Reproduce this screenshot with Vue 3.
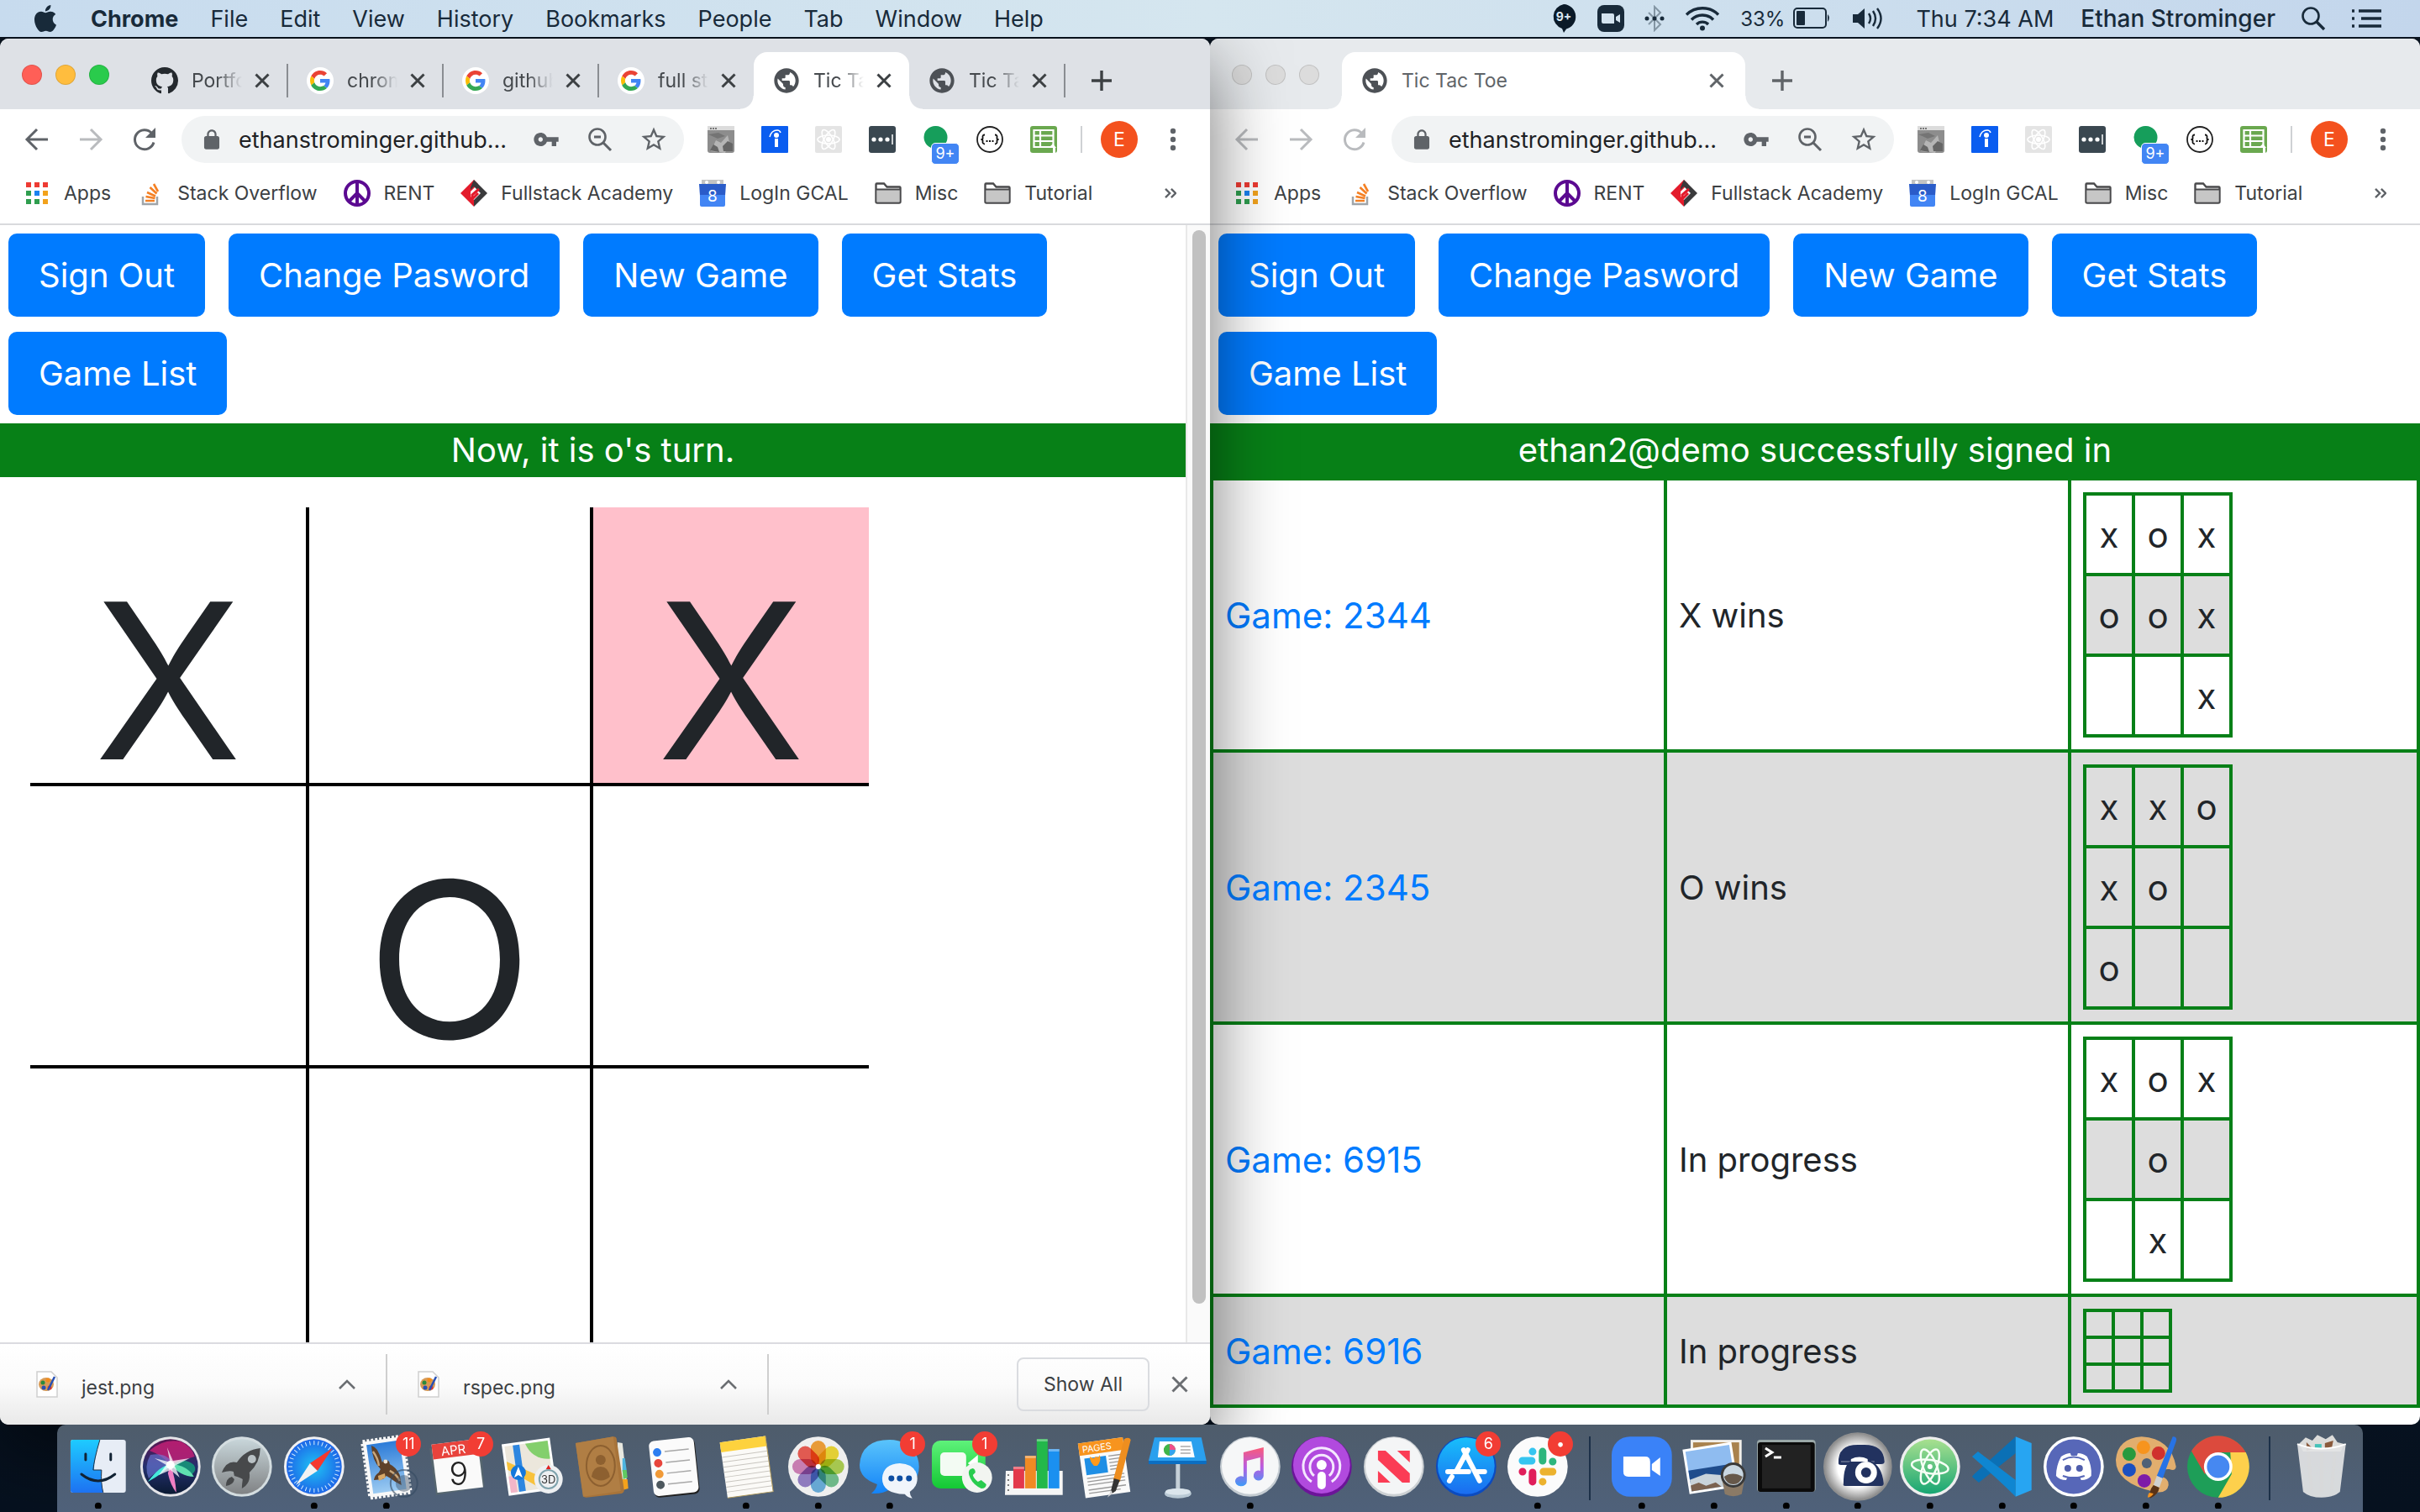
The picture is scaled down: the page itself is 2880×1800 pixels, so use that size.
<script setup>
import { ref } from 'vue'

const menus = ['File', 'Edit', 'View', 'History', 'Bookmarks', 'People', 'Tab', 'Window', 'Help']

const windows = [
  {
    id: 'left',
    front: true,
    tabs: [
      { icon: 'github', title: 'Portfolio' },
      { icon: 'google', title: 'chrome' },
      { icon: 'google', title: 'github t' },
      { icon: 'google', title: 'full stack' },
      { icon: 'globe', title: 'Tic Tac Toe', active: true },
      { icon: 'globe', title: 'Tic Tac Toe' }
    ],
    message: "Now, it is o's turn."
  },
  {
    id: 'right',
    front: false,
    tabs: [{ icon: 'globe', title: 'Tic Tac Toe', active: true }],
    message: 'ethan2@demo successfully signed in'
  }
]

const address = ref('ethanstrominger.github...')
const actions = ['Sign Out', 'Change Pasword', 'New Game', 'Get Stats', 'Game List']
const board = ['X', '', 'X', '', 'O', '', '', '', '']
const lastMove = 2

const games = [
  { id: 2344, state: 'X wins', rows: [['x', 'o', 'x'], ['o', 'o', 'x'], ['', '', 'x']] },
  { id: 2345, state: 'O wins', rows: [['x', 'x', 'o'], ['x', 'o', ''], ['o', '', '']] },
  { id: 6915, state: 'In progress', rows: [['x', 'o', 'x'], ['', 'o', ''], ['', 'x', '']] },
  { id: 6916, state: 'In progress', rows: [['', '', ''], ['', '', ''], ['', '', '']], empty: true }
]

const bookmarks = [
  { label: 'Apps', art: '<g fill="#ee3b33"><path d="M3 3h6v6H3zM13 3h6v6h-6zM23 3h6v6h-6z"/></g><path fill="#2f9e4f" d="M3 13h6v6H3zM3 23h6v6H3zM13 23h6v6h-6z"/><path fill="#1a82f0" d="M13 13h6v6h-6z"/><path fill="#f2a21c" d="M23 13h6v6h-6zM23 23h6v6h-6z"/>' },
  { label: 'Stack Overflow', art: '<path d="M7 20v9h17v-9" fill="none" stroke="#9fa5aa" stroke-width="2.5"/><path d="M10 25h11M10.500 20l11 2M12 15l10 4.500M15.500 9l8 7.500M20 5l5 9" stroke="#f48024" stroke-width="2.600" fill="none"/>' },
  { label: 'RENT', art: '<circle cx="16" cy="16" r="14" fill="#fff" stroke="#5b0a91" stroke-width="4"/><path d="M16 2v28M16 16L6 26M16 16l10 10" stroke="#5b0a91" stroke-width="4"/>' },
  { label: 'Fullstack Academy', art: '<path d="M16 0L0 16l16 16V24l-4-4v-6l9-9z" fill="#e31b2b"/><path d="M16 0l16 16-16 16V24l8-8-8-8-4 4V9z" fill="#3a3a3c"/><path d="M22 11l-8 7v4M21 16l-7 7" stroke="#e31b2b" stroke-width="3" fill="none"/>' },
  { label: 'LogIn GCAL', art: '<path fill="#c3c3c3" d="M3 0h26v7H3z"/><circle cx="9" cy="3" r="2" fill="#fff"/><circle cx="23" cy="3" r="2" fill="#fff"/><path fill="#2a5cc9" d="M0 5h32l-1 14H1z"/><path fill="#4285f4" d="M1 18h30v12q0 2-2 2H3q-2 0-2-2z"/><text x="16" y="26" font-size="19" text-anchor="middle" fill="#fff" font-family="Inter, sans-serif">8</text>' },
  { label: 'Misc', folder: true },
  { label: 'Tutorial', folder: true }
]
const folderArt = '<path d="M1.500 26V5.500q0-1 1-1H11l3.500 4H29.500q1 0 1 1V26q0 1.500-1.500 1.500H3Q1.500 27.500 1.500 26z" fill="#fff" stroke="#4a4a4c" stroke-width="2.400"/><path d="M2.500 12h27v14.500h-27z" fill="#c6c6c6"/><path d="M2 11.500h28" stroke="#4a4a4c" stroke-width="2"/>'

const favicons = {
  github: '<path transform="scale(2)" fill="#24292e" fill-rule="evenodd" d="M8 0C3.580 0 0 3.580 0 8c0 3.540 2.290 6.530 5.470 7.590.4.070.55-.17.55-.38 0-.19-.01-.82-.01-1.490-2.010.37-2.530-.49-2.690-.94-.09-.23-.48-.94-.82-1.130-.28-.15-.68-.52-.01-.53.63-.01 1.080.58 1.230.82.72 1.210 1.870.87 2.330.66.070-.52.280-.87.510-1.070-1.780-.2-3.640-.89-3.640-3.950 0-.87.310-1.590.820-2.150-.08-.2-.36-1.020.08-2.120 0 0 .67-.21 2.200.82.64-.18 1.320-.27 2-.27s1.360.09 2 .27c1.530-1.040 2.200-.82 2.200-.82.440 1.100.160 1.920.080 2.120.510.560.820 1.270.820 2.150 0 3.070-1.870 3.750-3.650 3.950.290.250.540.730.540 1.480 0 1.070-.01 1.930-.01 2.200 0 .21.150.460.550.380A8.010 8.010 0 0016 8c0-4.420-3.580-8-8-8z"/>',
  google: '<circle cx="16" cy="16" r="16" fill="#fff"/><g transform="translate(4 4) scale(.5)"><path fill="#EA4335" d="M24 9.500c3.540 0 6.710 1.220 9.210 3.600l6.850-6.850C35.900 2.380 30.470 0 24 0 14.620 0 6.510 5.380 2.560 13.220l7.980 6.190C12.430 13.720 17.740 9.500 24 9.500z"/><path fill="#4285F4" d="M46.980 24.550c0-1.570-.15-3.090-.38-4.550H24v9.020h12.940c-.58 2.960-2.260 5.480-4.780 7.180l7.730 6c4.510-4.180 7.090-10.360 7.090-17.650z"/><path fill="#FBBC05" d="M10.530 28.590c-.48-1.450-.76-2.990-.76-4.590s.27-3.140.76-4.590l-7.980-6.190C.92 16.460 0 20.120 0 24c0 3.880.92 7.540 2.560 10.780l7.970-6.190z"/><path fill="#34A853" d="M24 48c6.480 0 11.930-2.130 15.890-5.810l-7.730-6c-2.150 1.450-4.920 2.300-8.160 2.300-6.260 0-11.570-4.220-13.470-9.910l-7.980 6.190C6.510 42.620 14.620 48 24 48z"/></g>',
  globe: '<path transform="scale(1.333)" fill="#4d5156" d="M12 1C5.900 1 1 5.900 1 12s4.900 11 11 11 11-4.900 11-11S18.100 1 12 1zm-1 18.930c-3.950-.49-7-3.850-7-7.930 0-.62.080-1.210.210-1.790L9 15v1c0 1.100.9 2 2 2v1.930zm6.900-2.540c-.26-.81-1-1.390-1.900-1.390h-1v-3c0-.55-.45-1-1-1H8v-2h2c.55 0 1-.45 1-1V7h2c1.100 0 2-.9 2-2v-.41c2.930 1.190 5 4.060 5 7.410 0 2.080-.8 3.970-2.100 5.390z"/>'
}

const extensions = [
  { name: 'Screenshot', art: '<rect width="32" height="32" rx="3" fill="#8d8d8d"/><path d="M0 0h32v5H0z" fill="#dcdcdc"/><path d="M3 2h2v2H3zM6 2h2v2H6zM9 2h2v2H9z" fill="#777"/><path d="M4 30l6-13 6 3 8-9 2 8-5 13z" fill="#b5b5b5"/><path d="M3 29l4-7 5 3 2 6zM18 24l6-6 6 3v9H19z" fill="#666"/><path d="M1 10l12-2 8 4-9 3z" fill="#747474"/>' },
  { name: 'Info', art: '<rect width="32" height="32" rx="1" fill="#0a5df0"/><circle cx="18" cy="11" r="3" fill="#fff"/><path d="M16 15h4v10h-4z" fill="#fff"/><path d="M10 13q2-8 9-8 3 0 4 3" stroke="#fff" stroke-width="1.500" fill="none"/>' },
  { name: 'React', art: '<rect width="32" height="32" rx="2" fill="#e4e4e4"/><g fill="none" stroke="#fff" stroke-width="1.600"><ellipse cx="16" cy="16" rx="13" ry="5"/><ellipse cx="16" cy="16" rx="13" ry="5" transform="rotate(60 16 16)"/><ellipse cx="16" cy="16" rx="13" ry="5" transform="rotate(120 16 16)"/></g><circle cx="16" cy="16" r="3" fill="#fff"/>' },
  { name: 'Passwords', art: '<rect width="32" height="32" rx="3" fill="#3a4750"/><circle cx="6" cy="16" r="2.600" fill="#fff"/><circle cx="14" cy="16" r="2.600" fill="#fff"/><circle cx="22" cy="16" r="2.600" fill="#fff"/><path d="M28 10v12" stroke="#fff" stroke-width="1.500"/>' },
  { name: 'Hangouts', badge: '9+', art: '<path d="M16 0a14 13.500 0 1 1-1 27A14 13.500 0 0 1 16 0z" fill="#169e5b"/>' },
  { name: 'JSON', art: '<circle cx="16" cy="16" r="15" fill="#fff" stroke="#222" stroke-width="1.800"/><path d="M10 10.500q-3 0-2.500 3t-2 2.500q2.500 0 2 2.500t2.500 3M22 10.500q3 0 2.500 3t2 2.500q-2.500 0-2 2.500t-2.500 3" fill="none" stroke="#111" stroke-width="1.800"/><path d="M11.500 17h2v2h-2zM15 17h2v2h-2zM18.500 17h2v2h-2z" fill="#111"/>' },
  { name: 'Sheets', art: '<rect width="32" height="32" rx="3" fill="#6aa84f"/><path d="M4.500 5h23v20h-23zM4.500 11.500h23M4.500 18h23M12 5v20" fill="none" stroke="#fff" stroke-width="2.200"/><path d="M27 32v-6h-5l5-5 4 5h-1v6z" fill="#fff"/>' }
]

const downloads = ['jest.png', 'rspec.png']

const petals = ['#f79a1f', '#f2d91c', '#a6cf3d', '#62bd82', '#5aa9dd', '#8b72c4', '#cf74b4', '#ef4a3e']
const petalArt = petals.map((c, i) => `<rect x="-9" y="-31" width="18" height="29" rx="9" fill="${c}" opacity=".88" transform="rotate(${i * 45})"/>`).join('')
const ticks = Array.from({ length: 36 }, (_, i) => `<path d="M0 -31v5" stroke="#d9efff" stroke-width="1" transform="rotate(${i * 10})"/>`).join('')

const dockLeft = [
  { name: 'Finder', open: true, art: '<rect x="-33" y="-32" width="66" height="63" rx="3" fill="#e7edf6"/><path d="M-30-32H2Q-5-8-5 4H4Q3 20 6 31H-30q-3 0-3-3V-29q0-3 3-3z" fill="url(#finder)"/><path d="M2-32Q-5-8-6 4H4Q3 20 6 31" fill="none" stroke="#234" stroke-width="1"/><path d="M-15-15v7M15-15v7" stroke="#123" stroke-width="3" stroke-linecap="round"/><path d="M-20 9Q0 25 20 9" fill="none" stroke="#123" stroke-width="3" stroke-linecap="round"/>' },
  { name: 'Siri', art: '<circle r="36" fill="#e4e4e8"/><circle r="33" fill="url(#siri)"/><path d="M-25-19Q-8-34 12-30 26-24 29-12 14-8 2 0-10-14-25-19z" fill="#d0207a" opacity=".75"/><path d="M-24-14Q-2-18 4 0-8-2-26 14-32 0-24-14z" fill="#6f7fe0" opacity=".6"/><path d="M2-2Q16-12 28-2 32 4 26 9 14 2 2-2z" fill="#16957a" opacity=".9"/><path d="M-27 18Q-12-2 1-3-8 8-27 18z" fill="#45eadb"/><path d="M0-3Q20-2 28 12 12 12 0-3z" fill="#5fe0b0"/><path d="M0-3Q6 14 7 31 0 22-3 8z" fill="#f07fc4"/><path d="M0-3l-4-20 7 16 20-3-18 9 6 14L0 4l-14 6L-5-2l-14-8 16 4z" fill="#fff" opacity=".75"/><circle cy="-2" r="5" fill="#fff"/>' },
  { name: 'Launchpad', art: '<circle r="36" fill="#d4dde0"/><circle r="33" fill="url(#pad)"/><path d="M22-22Q4-20-6-5-18-8-24 7-14 4-10 6L-9 11Q-2 13 1 15 0 22 0 26 11 20 9 7 22-5 22-22z" fill="#47494b"/><circle cx="12" cy="-9" r="5" fill="#b9c1c4"/><path d="M-12 12Q-19 14-19 23-10 22-9 15z" fill="#47494b"/>' },
  { name: 'Safari', open: true, art: `<circle r="36" fill="#f1f1f3"/><circle r="33" fill="url(#safari)"/>${ticks}<path d="M22-22L4 5-5-4z" fill="#f5382f"/><path d="M-22 22L4 5-5-4z" fill="#f2f2f2"/>` },
  { name: 'Mail', open: true, badge: '11', art: '<g transform="rotate(-8)"><rect x="-24" y="-33" width="48" height="67" fill="#f8f8f8" stroke="#f8f8f8" stroke-width="5" stroke-dasharray="3 2"/><rect x="-20" y="-29" width="40" height="59" fill="url(#sky)"/></g><path d="M-18-25q4 1 7 5 4 7 6 15 2-4 5-3 4 1 4 5 8 4 12 13l2 12q-7-3-13-8l-5-3-4 4-11 1q1-6 6-9l2-4q-10-10-11-28z" fill="#5f4129"/><path d="M-16-18q6 8 7 17M4 5q8 4 12 12" stroke="#c9a77c" stroke-width="2.500" fill="none"/><path d="M-10 11l8-3 1 5-8 4z" fill="#d8a868"/><circle cx="-1" cy="-6" r="2.500" fill="#f0e6d8"/><circle cx="21" cy="20" r="16" fill="none" stroke="#344a60" stroke-width="2" opacity=".6"/><circle cx="21" cy="20" r="10" fill="#3d5268" opacity=".45"/>' },
  { name: 'Calendar', badge: '7', art: '<path d="M-34-22L-26 34 32 24 28-20z" fill="#56666f"/><g transform="rotate(-7)"><rect x="-28" y="-30" width="55" height="58" fill="#fafafa"/><rect x="-28" y="-30" width="55" height="18" fill="#e8433c"/></g><text x="-3" y="-15" transform="rotate(-7)" font-size="15" text-anchor="middle" fill="#fff" font-family="Inter, sans-serif">APR</text><text x="1" y="22" font-size="38" font-weight="300" text-anchor="middle" fill="#222" font-family="Inter, sans-serif">9</text>' },
  { name: 'Maps', art: '<g transform="rotate(-8)"><rect x="-30" y="-31" width="58" height="62" fill="#fff"/><rect x="-27" y="-28" width="52" height="56" fill="#ece7dc"/><path d="M-2-28h27v22Q4-8-2-28z" fill="#83cf6c"/><path d="M-27-10L25 22v6H10L-27 0z" fill="#f8c23c"/><path d="M-17-28h8v56h-8z" fill="#2d86e0"/><path d="M-27 8h8v20h-8z" fill="#f3b6c8"/></g><circle cx="-14" cy="7" r="9" fill="#1478dc"/><path d="M-14 0l5 13-5-3-5 3z" fill="#fff"/><circle cx="22" cy="15" r="17" fill="#eef0f2"/><circle cx="22" cy="15" r="11" fill="none" stroke="#7fa3ad" stroke-width="2"/><text x="22" y="20" font-size="13" text-anchor="middle" fill="#333" font-family="Inter, sans-serif">3D</text><path d="M22-2l3 5h-6z" fill="#e02020"/>' },
  { name: 'Contacts', art: '<path d="M18-29l6 1 6 52-10 6z" fill="#e8e8e0"/><path d="M24-10h3l2 14-5 2z" fill="#4fb5e0"/><path d="M24 4h5l1 9-5 2z" fill="#5fca62"/><path d="M24 15h6l1 11-7 2z" fill="#f5a21c"/><path d="M-32-28L13-36q4 0 4 3L26 28q0 3-3 4L-19 37q-4 0-4-3z" fill="#a8743a"/><path d="M-32-28L13-36l9 65-45 7z" fill="#b07e44"/><ellipse cx="-2" cy="-1" rx="17" ry="24" fill="none" stroke="#8d6030" stroke-width="2"/><circle cx="-2" cy="-8" r="6" fill="#8d6030"/><path d="M-13 12q2-12 11-12T9 12q-10 9-22 0z" fill="#8d6030"/>' },
  { name: 'Reminders', art: '<g transform="rotate(-6)"><rect x="-26" y="-31" width="54" height="66" rx="6" fill="#222"/><rect x="-27" y="-33" width="54" height="66" rx="6" fill="#fbfbfb"/><path d="M-9-19h29M-9-6h29M-9 7h29M-9 20h29" stroke="#a8a8a8" stroke-width="1.500"/><circle cx="-18" cy="-19" r="5" fill="#2c7df0"/><circle cx="-18" cy="-6" r="5" fill="#e8453c"/><circle cx="-18" cy="7" r="5" fill="#f19a37"/><circle cx="-18" cy="20" r="5" fill="#4d585e"/></g>' },
  { name: 'Notes', open: true, art: '<g transform="rotate(-8)"><rect x="-27" y="-33" width="55" height="67" fill="#fbfaf7"/><rect x="-27" y="-33" width="55" height="12" fill="#fdd23e"/><path d="M-27-15h55M-27-9h55M-27-3h55M-27 3h55M-27 9h55M-27 15h55M-27 21h55M-27 27h55" stroke="#c9c6c0" stroke-width="1"/><path d="M-27 34h55V-33" fill="none" stroke="#b0995a" stroke-width="1"/></g>' },
  { name: 'Photos', open: true, art: `<circle r="36" fill="#efefef"/><g class="petals">${petalArt}</g><circle r="3" fill="#fff"/>` },
  { name: 'Messages', open: true, badge: '1', art: '<path d="M0-32C20-32 35-19 35 0S20 27 0 27q-8 6-22 5 6-5 7-11Q-36 14-36-2-34-32 0-32z" fill="url(#msg)"/><path d="M12-4q20 1 21 18 0 10-9 16 0 4 3 8-6-1-9-5Q-9 32-9 14-8-3 12-4z" fill="#f0f5fb"/><circle cx="2" cy="14" r="3.500" fill="#0c4da2"/><circle cx="12" cy="14" r="3.500" fill="#0c4da2"/><circle cx="23" cy="14" r="3.500" fill="#0c4da2"/>' },
  { name: 'FaceTime', badge: '1', art: '<rect x="-36" y="-31" width="64" height="57" rx="10" fill="url(#face)"/><rect x="-26" y="-17" width="31" height="28" rx="5" fill="#f3fbf3"/><path d="M7-4l12-10v20z" fill="#fff"/><circle cx="18" cy="13" r="18" fill="#f2f5f1"/><path d="M10 3q-4 3 0 11t13 12q6 0 6-5l-6-5-4 2q-5-4-6-8l3-3q0-4-3-5z" fill="#28cc4e"/>' },
  { name: 'Numbers', art: '<path d="M-34 5H34V34H-35z" fill="#f6f6f6"/><path d="M-31 9v20" stroke="#777" stroke-width="2" stroke-dasharray="2 4"/><rect x="-25" y="0" width="13" height="26" fill="#e3384b"/><rect x="-11" y="-13" width="13" height="39" fill="#f08a24"/><rect x="3" y="-33" width="13" height="59" fill="#23b84a"/><rect x="17" y="-21" width="13" height="47" fill="#1b90f0"/><path d="M-25 0h13v3h-13zM-11-13H2v3h-13zM3-33h13v3H3zM17-21h13v3H17z" fill="#fff" opacity=".35"/>' },
  { name: 'Pages', art: '<g transform="rotate(-8)"><rect x="-29" y="-32" width="54" height="66" fill="#fafafa"/><rect x="-29" y="-32" width="54" height="15" fill="#f7941e"/><text x="-25" y="-20" font-size="11" fill="#fff" font-family="Inter, sans-serif">PAGES</text><rect x="-24" y="-13" width="26" height="20" fill="#1f8fe5"/><path d="M5-12h16M5-8h16M5-4h16M5 0h16M5 4h16M-24 11h45M-24 15h45M-24 19h45M-24 25h45M-24 29h38" stroke="#999" stroke-width="1.300"/></g><path d="M-19-12q5 4 7 0 4 2 5-2 2 8-3 13h-4q-5-5-5-11z" fill="#ff9a1c"/><path d="M22-33q6-3 8 1L17 18l-8-2z" fill="#ee8e1f"/><path d="M10 14l7 2-5 13-7 5z" fill="#333"/><path d="M7 28l-5 9 6-5z" fill="#ddd"/>' },
  { name: 'Keynote', art: '<path d="M-28-35h56l6 28H-35z" fill="#2aa0ee"/><path d="M-35-7h69v4h-69z" fill="#0b6ec2"/><path d="M-22-30h38l4 19h-44z" fill="#fff"/><circle cx="-10" cy="-20" r="7" fill="#3fb548"/><path d="M-10-20v-7a7 7 0 0 1 7 7z" fill="#f04f8b"/><path d="M-10-20h7a7 7 0 0 1-7 7z" fill="#34a4f0"/><path d="M3-24h12M3-20h12M3-16h12" stroke="#aaa" stroke-width="1.500"/><path d="M0-3v34" stroke="#c5d0d8" stroke-width="5"/><ellipse cx="0" cy="32" rx="16" ry="6" fill="#b8c8d4"/><ellipse cx="0" cy="30" rx="15" ry="4" fill="#dbe5ec"/>' },
  { name: 'Music', open: true, art: '<circle r="36" fill="#c5ccd2"/><circle cy="-1" r="34" fill="#f6f7f8"/><path d="M-8-17L16-23V11a6 6 0 1 1-4-6V-11L-4-7V17a7 6 0 1 1-4-5z" fill="url(#music)"/>' },
  { name: 'Podcasts', art: '<circle r="36" fill="#6c1499"/><circle cy="-2" r="34" fill="#b14ade"/><g fill="none" stroke="#f5e8ff" stroke-width="3"><path d="M-12 18a22 22 0 1 1 24 0M-9 11a14 14 0 1 1 18 0"/></g><circle cy="-2" r="6" fill="#fff"/><rect x="-5" y="6" width="10" height="21" rx="5" fill="#fff"/>' },
  { name: 'News', art: '<circle r="36" fill="#ccd0d3"/><circle cy="-1" r="34" fill="#f4f5f6"/><path d="M-19-19H-10L19 8v11H10L-19-8zM4-19h15V-5zM-19 5L-4 19h-15z" fill="#fb3c55"/>' },
  { name: 'App Store', badge: '6', art: '<circle r="36" fill="#0b4bc0"/><circle cy="-1" r="34" fill="url(#store)"/><path d="M2-20L-12 6M-17 12l-3 5M-3-20L16 17M-22 6H3M13 6h9" stroke="#fff" stroke-width="6" stroke-linecap="round"/>' },
  { name: 'Slack', open: true, badge: '•', art: '<circle r="36" fill="#fbfbfb"/><g stroke-width="9" stroke-linecap="round"><path d="M-18-7H-7M-6-18h.1" stroke="#36c5f0"/><path d="M6-18V-7M18-6h.1" stroke="#2eb67d"/><path d="M-6 7V18M-18 6h.1" stroke="#e01e5a"/><path d="M7 6H18M6 18h.1" stroke="#ecb22e"/></g>' }
]

const dockRight = [
  { name: 'Zoom', open: true, art: '<rect x="-36" y="-36" width="72" height="72" rx="22" fill="#3a82f8"/><path d="M-22-12H4q6 0 6 6V12h-26q-6 0-6-6z" fill="#fff"/><path d="M12-3l10-8V11L12 4z" fill="#fff"/>' },
  { name: 'Preview', open: true, art: '<rect x="-28" y="-32" width="61" height="42" fill="#f2efe9"/><rect x="-25" y="-29" width="55" height="38" fill="#a9824d"/><g transform="rotate(-9)"><rect x="-34" y="-26" width="59" height="54" fill="#fff"/><rect x="-31" y="-23" width="53" height="48" fill="#8fbcf0"/><path d="M-31 0h53v14h-53z" fill="#1f4c8c"/><path d="M-31 11l20-4 33 8v10h-53z" fill="#c9d3da"/><path d="M-31 18l10-2 8 5 12-2 6 6h-36z" fill="#7b6250"/></g><path d="M9 12h28l-4 21q-10 5-20 0z" fill="#8b7a66"/><circle cx="23" cy="10" r="15" fill="#3a3a3a"/><circle cx="23" cy="10" r="12" fill="#c9d7e2"/><path d="M12 12q10-7 22 0-3 9-11 9t-11-9z" fill="#66584a"/>' },
  { name: 'Terminal', open: true, art: '<rect x="-35" y="-32" width="70" height="62" rx="4" fill="#9aa8a8"/><rect x="-34" y="-29" width="68" height="59" rx="3" fill="#0b0b0b"/><rect x="-29" y="-26" width="58" height="52" fill="#222"/><path d="M-25-22l8 5-8 5M-15-11h9" fill="none" stroke="#fff" stroke-width="3"/>' },
  { name: 'Phone', open: true, art: '<circle r="41" fill="#8f8f8f"/><circle r="40" fill="url(#phone)"/><path d="M-23-4q-1-22 23-22h8q23 0 24 20 0 3-4 3H16q-4 0-4-6-10-5-20 0 0 7-5 7h-7q-3 0-3-2z" fill="#22325f"/><path d="M-20-6h40" stroke="#fff" stroke-width="2" opacity=".25"/><path d="M-8-14v8h20v-8h3v7q14 6 16 27 0 3-3 3h-43q-3 0-2-3 0-22 9-27v-7z" fill="#22325f"/><circle cx="10" cy="7" r="13" fill="#fff"/><circle cx="10" cy="7" r="6" fill="#22325f"/>' },
  { name: 'Atom', open: true, art: '<circle r="36" fill="#eee"/><circle r="32.500" fill="url(#atom)"/><g fill="none" stroke="#f5fff5" stroke-width="2.500"><ellipse rx="22" ry="8" transform="rotate(8)"/><ellipse rx="22" ry="8" transform="rotate(68)"/><ellipse rx="22" ry="8" transform="rotate(112)"/></g><circle r="3" fill="#fff"/>' },
  { name: 'Code', open: true, art: '<path d="M16-36v20L-28 19l-8-7q2-3 8-8z" fill="#0b70b5"/><path d="M-36-12l7-6L16 16v20Q-5 15-36-12z" fill="#0f86d1"/><path d="M16-36L35-28V28L16 36z" fill="#27a5f2"/>' },
  { name: 'Discord', open: true, art: '<circle r="36" fill="#fff"/><circle r="32.500" fill="#5767b8"/><path d="M-15-12q6-4 11-4l1 3H4l1-3q6 0 11 4 6 11 5 23-4 5-12 5l-2-4H-7l-2 4q-8 0-12-5 0-12 6-23z" fill="#fff"/><circle cx="-7" cy="2" r="4" fill="#4f5eac"/><circle cx="7" cy="2" r="4" fill="#4f5eac"/><path d="M-13-8q13-7 26 0M-13 11q13 5 26 0" stroke="#5767b8" stroke-width="2" fill="none"/>' },
  { name: 'Paint', open: true, art: '<path d="M-5-36Q30-34 36 0 35 6 28 3q-12-1-10 9 10 2 9 10Q25 33 10 30-36 20-36-8-34-34-5-36z" fill="#e2ae6e"/><circle cx="1" cy="-4" r="6" fill="#4f6076"/><circle cx="-3" cy="-23" r="8" fill="#f7941e"/><circle cx="-20" cy="-15" r="8" fill="#279a3e"/><circle cx="-20" cy="4" r="8" fill="#1b4fc0"/><circle cx="-2" cy="17" r="8" fill="#7d1ba8"/><circle cx="15" cy="-16" r="8" fill="#d0312d"/><path d="M32-36q6 0 4 6L20 14l-7-3z" fill="#2773e6"/><path d="M13 11l7 3-4 11-7-3z" fill="#d0d0d0"/><path d="M9 22l7 3q-1 8-11 13-2-9 4-16z" fill="#5a3216"/><path d="M2 37q0-4 2-6l5 1q-2 4-7 5z" fill="#f7941e"/>' },
  { name: 'Chrome', open: true, art: '<circle r="37" fill="#1e9e58"/><path d="M-32-18.500A37 37 0 0 1 32-18.500L33-17H0L-16 9z" fill="#dc4a3d"/><path d="M33-17A37 37 0 0 1 0 37L16 9 14.500-17z" fill="#fdd04c"/><circle r="17" fill="#fff"/><circle r="13.500" fill="#4688f1"/>' }
]
const trash = [
  { name: 'Trash', art: '<path d="M-27-27l8-8 8 4 6-7 10 5 8-5 6 9 8 2-4 9h-45z" fill="#dcdcda"/><path d="M-18-29l8 8-8 2zM4-28l10-3-2 10-8-1z" fill="#8a5a3c"/><path d="M-8-27h8v6h-8z" fill="#45c2b8"/><path d="M-29-27Q0-17 29-27L22 30Q14 37 0 37T-22 30z" fill="#e2e3e4" opacity=".93"/><path d="M-29-27Q0-16 29-27" fill="none" stroke="#fff" stroke-width="2"/><path d="M-16-18l4 46M16-18l-4 46M0-16v46" stroke="#d8d9da" stroke-width="4"/>' }
]
const dockGroups = [dockLeft, dockRight, trash]
</script>

<template>
  <div class="desktop">
    <svg class="defs" width="0" height="0" aria-hidden="true">
      <defs>
        <linearGradient id="finder" x2="0" y2="1"><stop stop-color="#1ecbff" /><stop offset="1" stop-color="#1d72f2" /></linearGradient>
        <linearGradient id="siri" x2="0" y2="1"><stop stop-color="#5b1450" /><stop offset=".5" stop-color="#24306e" /><stop offset="1" stop-color="#0b1a33" /></linearGradient>
        <linearGradient id="sky" x2="0" y2="1"><stop stop-color="#2d7cd8" /><stop offset="1" stop-color="#9ccbf2" /></linearGradient>
        <linearGradient id="pad" x2="0" y2="1"><stop stop-color="#c8d6da" /><stop offset="1" stop-color="#808284" /></linearGradient>
        <radialGradient id="safari"><stop stop-color="#1fc4f4" /><stop offset="1" stop-color="#1d66e8" /></radialGradient>
        <linearGradient id="msg" x2="0" y2="1"><stop stop-color="#5ac4fb" /><stop offset="1" stop-color="#1383f8" /></linearGradient>
        <linearGradient id="face" x2="0" y2="1"><stop stop-color="#5ef27a" /><stop offset="1" stop-color="#14c834" /></linearGradient>
        <linearGradient id="music" x2="0" y2="1"><stop stop-color="#fb5a78" /><stop offset=".5" stop-color="#b95be0" /><stop offset="1" stop-color="#3e9bf7" /></linearGradient>
        <linearGradient id="store" x2="0" y2="1"><stop stop-color="#18bffb" /><stop offset="1" stop-color="#1a6cf0" /></linearGradient>
        <radialGradient id="phone"><stop offset=".6" stop-color="#fff" /><stop offset="1" stop-color="#8b8b8b" /></radialGradient>
        <linearGradient id="atom" x2="0" y2="1"><stop stop-color="#a8e08f" /><stop offset="1" stop-color="#17a673" /></linearGradient>
      </defs>
    </svg>

    <header class="menubar">
      <nav class="menus">
        <svg class="apple" viewBox="0 0 24 24"><path fill="#182a3a" d="M12.152 6.896c-.948 0-2.415-1.078-3.960-1.040-2.040.027-3.910 1.183-4.961 3.014-2.117 3.675-.546 9.103 1.519 12.090 1.013 1.454 2.208 3.090 3.792 3.039 1.520-.065 2.090-.987 3.935-.987 1.831 0 2.350.987 3.960.948 1.637-.026 2.676-1.480 3.676-2.948 1.156-1.688 1.636-3.325 1.662-3.415-.039-.013-3.182-1.221-3.220-4.857-.026-3.040 2.480-4.494 2.597-4.559-1.429-2.090-3.623-2.324-4.390-2.376-2-.156-3.675 1.090-4.610 1.090zM15.530 3.830c.843-1.012 1.400-2.427 1.245-3.830-1.207.052-2.662.805-3.532 1.818-.78.896-1.454 2.338-1.273 3.714 1.338.104 2.715-.688 3.559-1.701" /></svg>
        <button class="menu app-name">Chrome</button>
        <button v-for="m in menus" :key="m" class="menu">{{ m }}</button>
      </nav>
      <div class="status">
        <svg width="32" height="36" viewBox="0 0 32 36"><path d="M16 1a15 15 0 0 1 3 29.500L16 35l-2-5A15 15 0 0 1 16 1z" fill="#0b1a28" /><text x="16" y="21" font-size="14" font-weight="700" text-anchor="middle" fill="#dce9f3" font-family="Inter, sans-serif">9+</text></svg>
        <svg width="32" height="32" viewBox="0 0 32 32"><rect width="32" height="32" rx="8" fill="#182a3a" /><path d="M5 10h13q2 0 2 2v10H7q-2 0-2-2zM22 14l5-3v10l-5-3z" fill="#d3e3ef" /></svg>
        <svg width="24" height="32" viewBox="0 0 24 32"><path d="M5 9l14 14-7 7V2l7 7L5 23" fill="none" stroke="#8496a4" stroke-width="2" /><g fill="#182a3a"><circle cx="3" cy="16" r="2.500" /><circle cx="12" cy="16" r="2.500" /><circle cx="21" cy="16" r="2.500" /></g></svg>
        <svg width="42" height="30" viewBox="0 0 42 30"><g fill="none" stroke="#182a3a" stroke-width="3.400"><path d="M2 10.500a27 27 0 0 1 38 0M8 16.500a18 18 0 0 1 26 0M14 22a10 10 0 0 1 14 0" /></g><circle cx="21" cy="26.500" r="3" fill="#182a3a" /></svg>
        <span class="battery">33%
          <svg width="46" height="26" viewBox="0 0 46 26"><rect x="1" y="1" width="38" height="23" rx="4" fill="none" stroke="#182a3a" stroke-width="2" /><rect x="4" y="4" width="10" height="17" rx="1" fill="#182a3a" /><path d="M41 8q4 4 0 9z" fill="#182a3a" /></svg>
        </span>
        <svg width="36" height="28" viewBox="0 0 36 28"><path d="M1 9h6l8-7v24l-8-7H1z" fill="#182a3a" /><path d="M20 8q4 6 0 12M25 5q6 9 0 18M30 2q9 12 0 24" fill="none" stroke="#182a3a" stroke-width="2.400" /></svg>
        <time class="clock">Thu 7:34 AM</time>
        <span class="user">Ethan Strominger</span>
        <svg width="30" height="30" viewBox="0 0 30 30"><circle cx="12" cy="12" r="9.500" fill="none" stroke="#182a3a" stroke-width="2.600" /><path d="M19 19l9 9" stroke="#182a3a" stroke-width="3.400" /></svg>
        <svg class="list" width="38" height="24" viewBox="0 0 38 24"><path d="M1 3h3M1 12h3M1 21h3M9 3h27M12 12h24M9 21h27" stroke="#182a3a" stroke-width="3.600" /></svg>
      </div>
    </header>

    <main class="windows">
      <section v-for="w in windows" :key="w.id" class="window" :class="w.front ? 'front' : 'behind'">
        <div class="tabstrip">
          <div class="lights"><i></i><i></i><i></i></div>
          <div v-for="(t, i) in w.tabs" :key="i" class="tab" :class="{ active: t.active }">
            <svg class="icon" viewBox="0 0 32 32" v-html="favicons[t.icon]"></svg>
            <span class="tab-title">{{ t.title }}</span>
            <button class="close" aria-label="Close tab"><svg width="20" height="20" viewBox="0 0 20 20"><path d="M2.500 2.500l15 15M17.500 2.500l-15 15" stroke="currentColor" stroke-width="3" /></svg></button>
          </div>
          <button class="new-tab" aria-label="New tab"><svg width="24" height="24" viewBox="0 0 24 24"><path d="M12 0v24M0 12h24" stroke="currentColor" stroke-width="3.400" /></svg></button>
        </div>

        <div class="toolbar">
          <div class="nav">
            <button aria-label="Back"><svg class="icon" viewBox="0 0 32 32"><path d="M29 16H5M16 4L4 16l12 12" fill="none" stroke="currentColor" stroke-width="3" /></svg></button>
            <button class="dim" aria-label="Forward"><svg class="icon" viewBox="0 0 32 32"><path d="M3 16h24M16 4l12 12-12 12" fill="none" stroke="currentColor" stroke-width="3" /></svg></button>
            <button aria-label="Reload"><svg class="icon" viewBox="0 0 32 32"><path d="M27 19.500A11.500 11.500 0 1 1 24.500 8.500" fill="none" stroke="currentColor" stroke-width="3" /><path d="M29 2v12H17z" fill="currentColor" /></svg></button>
          </div>
          <div class="omnibox">
            <svg width="24" height="26" viewBox="2 0 20 23"><path fill="#5f6368" fill-rule="evenodd" d="M18 8h-1V6c0-2.760-2.240-5-5-5S7 3.240 7 6v2H6c-1.100 0-2 .9-2 2v10c0 1.100.9 2 2 2h12c1.100 0 2-.9 2-2V10c0-1.100-.9-2-2-2zM9 6c0-1.660 1.340-3 3-3s3 1.340 3 3v2H9z" /></svg>
            <input v-model="address" type="text" aria-label="Address" />
            <svg class="icon" viewBox="0 0 24 24"><path fill="#5f6368" d="M12.650 10C11.830 7.670 9.610 6 7 6c-3.310 0-6 2.690-6 6s2.690 6 6 6c2.610 0 4.830-1.670 5.650-4H17v4h4v-4h2v-4H12.650zM7 14c-1.100 0-2-.9-2-2s.9-2 2-2 2 .9 2 2-.9 2-2 2z" /></svg>
            <svg class="icon" viewBox="0 0 32 32"><circle cx="13" cy="13" r="9.500" fill="none" stroke="#5f6368" stroke-width="2.600" /><path d="M9 13h8M20 20l9 9" stroke="#5f6368" stroke-width="3" /></svg>
            <svg class="icon" viewBox="1 1 22 22"><path fill="#5f6368" d="M22 9.240l-7.190-.62L12 2 9.190 8.630 2 9.240l5.460 4.730L5.820 21 12 17.270 18.180 21l-1.630-7.030L22 9.240zM12 15.400l-3.760 2.270 1-4.280-3.320-2.880 4.380-.38L12 6.100l1.710 4.040 4.380.38-3.320 2.880 1 4.280L12 15.400z" /></svg>
          </div>
          <div class="extensions">
            <button v-for="e in extensions" :key="e.name" :aria-label="e.name">
              <svg class="icon" viewBox="0 0 32 32" v-html="e.art"></svg>
              <span v-if="e.badge" class="ext-badge">{{ e.badge }}</span>
            </button>
          </div>
          <span class="divider"></span>
          <button class="avatar">E</button>
          <button class="more" aria-label="More"><svg class="icon" viewBox="0 0 32 32" fill="#5f6368"><circle cx="16" cy="6" r="3.200" /><circle cx="16" cy="16" r="3.200" /><circle cx="16" cy="26" r="3.200" /></svg></button>
        </div>

        <nav class="bookmarks">
          <a v-for="b in bookmarks" :key="b.label" href="#">
            <svg class="icon" viewBox="0 0 32 32" v-html="b.folder ? folderArt : b.art"></svg>{{ b.label }}
          </a>
          <button class="overflow" aria-label="More bookmarks"><svg width="14" height="12" viewBox="0 0 16 14"><path d="M1 1l6 6-6 6M9 1l6 6-6 6" fill="none" stroke="#5f6368" stroke-width="2.800" /></svg></button>
        </nav>

        <div class="viewport">
          <div class="page">
            <div class="actions">
              <button v-for="a in actions" :key="a" class="btn">{{ a }}</button>
            </div>
            <div class="message">{{ w.message }}</div>

            <div v-if="w.front" class="board">
              <button v-for="(mark, i) in board" :key="i" class="cell" :class="{ latest: i === lastMove }" :aria-label="'Square ' + (i + 1)">{{ mark }}</button>
            </div>

            <table v-else class="games">
              <colgroup><col class="c-game" /><col class="c-state" /><col /></colgroup>
              <tbody>
                <tr v-for="g in games" :key="g.id">
                  <td><a href="#">Game: {{ g.id }}</a></td>
                  <td>{{ g.state }}</td>
                  <td>
                    <table class="mini" :class="{ empty: g.empty }">
                      <tbody>
                        <tr v-for="(r, ri) in g.rows" :key="ri">
                          <td v-for="(c, ci) in r" :key="ci">{{ c }}</td>
                        </tr>
                      </tbody>
                    </table>
                  </td>
                </tr>
              </tbody>
            </table>
          </div>
          <div v-if="w.front" class="scrollbar"><div class="thumb"></div></div>
        </div>

        <footer v-if="w.front" class="downloads">
          <div v-for="d in downloads" :key="d" class="download">
            <svg width="26" height="32" viewBox="0 0 26 32"><path d="M1 1h17l7 7v23H1z" fill="#fff" stroke="#cfcfcf" stroke-width="1.500" /><ellipse cx="12" cy="16" rx="9" ry="8" fill="#d79a55" /><circle cx="8" cy="14" r="2.500" fill="#2a8b3c" /><circle cx="9" cy="20" r="2.500" fill="#2750b5" /><circle cx="14" cy="11" r="2.500" fill="#f28c1c" /><circle cx="16" cy="20" r="2.500" fill="#d33" /><path d="M22 7l-8 16" stroke="#2750b5" stroke-width="2.500" /></svg>
            <span class="file">{{ d }}</span>
            <button aria-label="Options"><svg width="20" height="12" viewBox="0 0 20 12"><path d="M1 11l9-9 9 9" fill="none" stroke="#6b6e72" stroke-width="2.600" /></svg></button>
          </div>
          <button class="show-all">Show All</button>
          <button class="dismiss" aria-label="Close downloads"><svg width="20" height="20" viewBox="0 0 20 20"><path d="M1.500 1.500l17 17M18.500 1.500l-17 17" stroke="#6b6e72" stroke-width="3" /></svg></button>
        </footer>
      </section>
    </main>

    <footer class="dock">
      <div v-for="(group, gi) in dockGroups" :key="gi" class="dock-group" :style="{ flexGrow: group.length }">
        <button v-for="d in group" :key="d.name" class="dock-item" :aria-label="d.name">
          <svg class="dock-art" viewBox="-43 -50 86 100">
            <g v-html="d.art"></g>
            <circle v-if="d.open" cy="47" r="4" fill="#000" />
          </svg>
          <span v-if="d.badge" class="badge">{{ d.badge }}</span>
        </button>
      </div>
    </footer>
  </div>
</template>

<style>
body {
  margin: 0;
}
.petals rect {
  mix-blend-mode: multiply;
}
</style>

<style scoped>
* {
  box-sizing: border-box;
}
.desktop {
  height: 100vh;
  display: flex;
  flex-direction: column;
  overflow: hidden;
  background: linear-gradient(#0a1420 0 60%, #06111f);
  font-family: Inter, "Noto Sans", sans-serif;
  color: #212529;
}
.defs {
  position: absolute;
}
button {
  padding: 0;
  border: 0;
  background: none;
  color: inherit;
  font: inherit;
  cursor: pointer;
}
svg {
  display: block;
  flex: none;
}
.icon {
  width: 32px;
  height: 32px;
}

/* menu bar */
.menubar {
  position: relative;
  z-index: 3;
  flex: none;
  display: flex;
  justify-content: space-between;
  height: 44px;
  margin-bottom: 2px;
  padding: 0 44px 0 38px;
  background: linear-gradient(90deg, #c7dbee, #d5e6ef 50%, #c3d6ec);
  color: #182a3a;
  font-size: 27px;
}
.menus,
.status {
  display: flex;
  align-items: center;
  white-space: nowrap;
}
.menus {
  gap: 38px;
}
.apple {
  width: 32px;
  height: 32px;
}
.app-name {
  font-weight: 700;
}
.status {
  gap: 24px;
}
.battery {
  display: flex;
  align-items: center;
  gap: 10px;
  font-size: 24px;
}
.clock {
  margin-left: 16px;
}
.user {
  margin: 0 6px 0 8px;
  font-size: 28px;
  font-weight: 500;
}
.list {
  margin-left: 6px;
}

/* browser windows */
.windows {
  flex: 1;
  min-height: 0;
  display: grid;
  grid-template-columns: 1fr 1fr;
}
.window {
  display: flex;
  flex-direction: column;
  min-width: 0;
  min-height: 0;
  overflow: hidden;
  border-radius: 10px;
  background: #fff;
}
.front {
  position: relative;
  z-index: 2;
  box-shadow: 0 30px 90px rgba(0, 0, 0, 0.55);
}
.tabstrip {
  flex: none;
  display: flex;
  align-items: stretch;
  height: 84px;
  padding-top: 16px;
  background: #dee1e6;
  color: #45494d;
  font-size: 23px;
}
.behind .tabstrip {
  background: #e7eaed;
  color: #606468;
}
.lights {
  display: flex;
  gap: 16px;
  width: 157px;
  padding: 15px 0 0 26px;
}
.lights i {
  width: 24px;
  height: 24px;
  border: 1px solid rgba(0, 0, 0, 0.12);
  border-radius: 50%;
  background: #ff5f57;
}
.lights i:nth-child(2) {
  background: #ffbd3e;
}
.lights i:nth-child(3) {
  background: #2acb4c;
}
.behind .lights i {
  background: #dcdcdc;
}
.tab {
  position: relative;
  display: flex;
  align-items: center;
  width: 185px;
  padding: 0 20px 0 23px;
}
.tab::after {
  content: "";
  position: absolute;
  right: -1px;
  top: 14px;
  width: 2px;
  height: 40px;
  background: #8a8d92;
}
.tab.active::after,
.tab:has(+ .active)::after {
  display: none;
}
.behind .tab {
  width: 480px;
}
.tab.active {
  border-radius: 16px 16px 0 0;
  background: #fff;
}
.tab.active::before {
  content: "";
  position: absolute;
  left: -16px;
  right: -16px;
  bottom: 0;
  height: 16px;
  background:
    radial-gradient(circle at 0 0, transparent 15px, #fff 16px) left / 16px 16px no-repeat,
    radial-gradient(circle at 100% 0, transparent 15px, #fff 16px) right / 16px 16px no-repeat;
}
.tab-title {
  flex: 1;
  margin: 0 14px 0 16px;
  overflow: hidden;
  white-space: nowrap;
  mask-image: linear-gradient(90deg, #000 50%, transparent);
}
.behind .tab-title {
  mask-image: none;
}
.close {
  color: #3c4043;
}
.behind .close {
  margin-right: 4px;
  color: inherit;
}
.new-tab {
  padding: 0 32px;
  color: #3c4043;
}
.behind .new-tab {
  color: inherit;
}
.toolbar {
  flex: none;
  display: flex;
  align-items: center;
  height: 72px;
  padding: 0 28px;
  color: #5f6368;
}
.nav,
.extensions {
  display: flex;
  gap: 32px;
}
.dim,
.behind .nav {
  color: #b9bbbe;
}
.omnibox {
  flex: 1;
  min-width: 0;
  display: flex;
  align-items: center;
  gap: 32px;
  height: 56px;
  margin: 0 28px;
  padding: 0 20px 0 24px;
  border-radius: 28px;
  background: #f1f3f4;
}
.omnibox input {
  flex: 1;
  min-width: 0;
  margin: 0 -20px 0 -12px;
  padding: 0;
  border: 0;
  background: none;
  color: #202124;
  font: 27px Inter, sans-serif;
}
.extensions button {
  position: relative;
}
.ext-badge {
  position: absolute;
  left: 10px;
  top: 20px;
  width: 34px;
  border: 1px solid #fff;
  border-radius: 5px;
  background: #4285f4;
  color: #fff;
  font-size: 18px;
  line-height: 24px;
  text-align: center;
}
.divider {
  width: 2px;
  height: 32px;
  margin: 0 22px 0 28px;
  background: #cfd1d4;
}
.avatar {
  width: 44px;
  height: 44px;
  margin-right: 26px;
  border-radius: 50%;
  background: #f4511e;
  color: #fff;
  font-size: 23px;
}
.bookmarks {
  flex: none;
  display: flex;
  align-items: center;
  gap: 31px;
  height: 66px;
  padding: 0 40px 8px 28px;
  border-bottom: 2px solid #d9dadd;
  font-size: 23px;
}
.bookmarks a {
  display: flex;
  align-items: center;
  gap: 16px;
  color: #3c4043;
  text-decoration: none;
  white-space: nowrap;
}
.overflow {
  margin-left: auto;
}

/* game page */
.viewport {
  flex: 1;
  min-height: 0;
  display: flex;
}
.page {
  flex: 1;
  min-width: 0;
  overflow: hidden;
  font-size: 40px;
}
.scrollbar {
  width: 29px;
  padding: 6px;
  border-left: 2px solid #e8e8e8;
  background: #fafafa;
}
.thumb {
  width: 16px;
  height: 97%;
  border-radius: 8px;
  background: #c1c1c1;
}
.actions {
  display: flex;
  flex-wrap: wrap;
  gap: 18px 28px;
  padding: 10px;
}
.btn {
  height: 99px;
  padding: 0 36px;
  border-radius: 10px;
  background: #007bff;
  color: #fff;
}
.message {
  background: #078017;
  color: #fff;
  line-height: 64px;
  text-align: center;
}
.board {
  display: grid;
  grid-template-columns: 332px 338px 328px;
  grid-template-rows: 332px 336px 336px;
  margin: 36px;
}
.cell {
  display: flex;
  align-items: flex-start;
  justify-content: center;
  padding-top: 84px;
  border: 0 solid #000;
  border-width: 0 4px 4px 0;
  font-size: 258px;
  line-height: 244px;
}
.cell:nth-child(3n) {
  border-right-width: 0;
}
.latest {
  background: #ffc0cb padding-box;
}
.games {
  width: 100%;
  border-collapse: collapse;
  table-layout: fixed;
}
.c-game {
  width: 37.6%;
}
.c-state {
  width: 33.5%;
}
td {
  padding: 14px;
  border: 4px solid #078017;
}
tr:nth-child(even) {
  background: #ddd;
}
.games a {
  color: #007bff;
  font-size: 42px;
  text-decoration: none;
}
.mini {
  border-collapse: collapse;
  font-size: 42px;
}
.mini td {
  width: 58px;
  height: 96px;
  text-align: center;
}
.mini.empty td {
  width: 34px;
  height: 32px;
}

/* downloads shelf */
.downloads {
  flex: none;
  display: flex;
  align-items: center;
  height: 98px;
  padding: 0 26px 0 7px;
  border-top: 2px solid #dbdbe0;
  background: linear-gradient(#fff, #fbfbfb 50%, #e9e9e9);
  color: #3c4043;
  font-size: 23px;
}
.download {
  display: flex;
  align-items: center;
  width: 454px;
  height: 72px;
  padding: 0 36px;
  border-right: 2px solid #cfcfcf;
}
.file {
  flex: 1;
  padding: 8px 0 0 28px;
}
.show-all {
  width: 158px;
  height: 64px;
  margin: 0 26px 0 auto;
  border: 2px solid #dadce0;
  border-radius: 8px;
}

/* dock */
.dock {
  position: relative;
  z-index: 3;
  flex: none;
  display: flex;
  align-items: flex-start;
  height: 104px;
  margin: 0 68px;
  padding: 0 6px;
  border-radius: 10px 10px 0 0;
  background: linear-gradient(#4e5c6b, #4f617a);
}
.dock-group {
  position: relative;
  flex: 1 1 0;
  display: flex;
}
.dock-group + .dock-group {
  margin-left: 38px;
}
.dock-group + .dock-group::before {
  content: "";
  position: absolute;
  left: -20px;
  top: 14px;
  width: 2px;
  height: 76px;
  background: #1c3048;
}
.dock-item {
  position: relative;
  flex: 1 1 0;
  min-width: 0;
}
.dock-art {
  width: 100%;
  height: 100px;
}
.badge {
  position: absolute;
  top: 8px;
  right: 1px;
  width: 30px;
  height: 30px;
  border-radius: 50%;
  background: #f23d34;
  color: #fff;
  font-size: 18px;
  line-height: 30px;
  text-align: center;
}
</style>
